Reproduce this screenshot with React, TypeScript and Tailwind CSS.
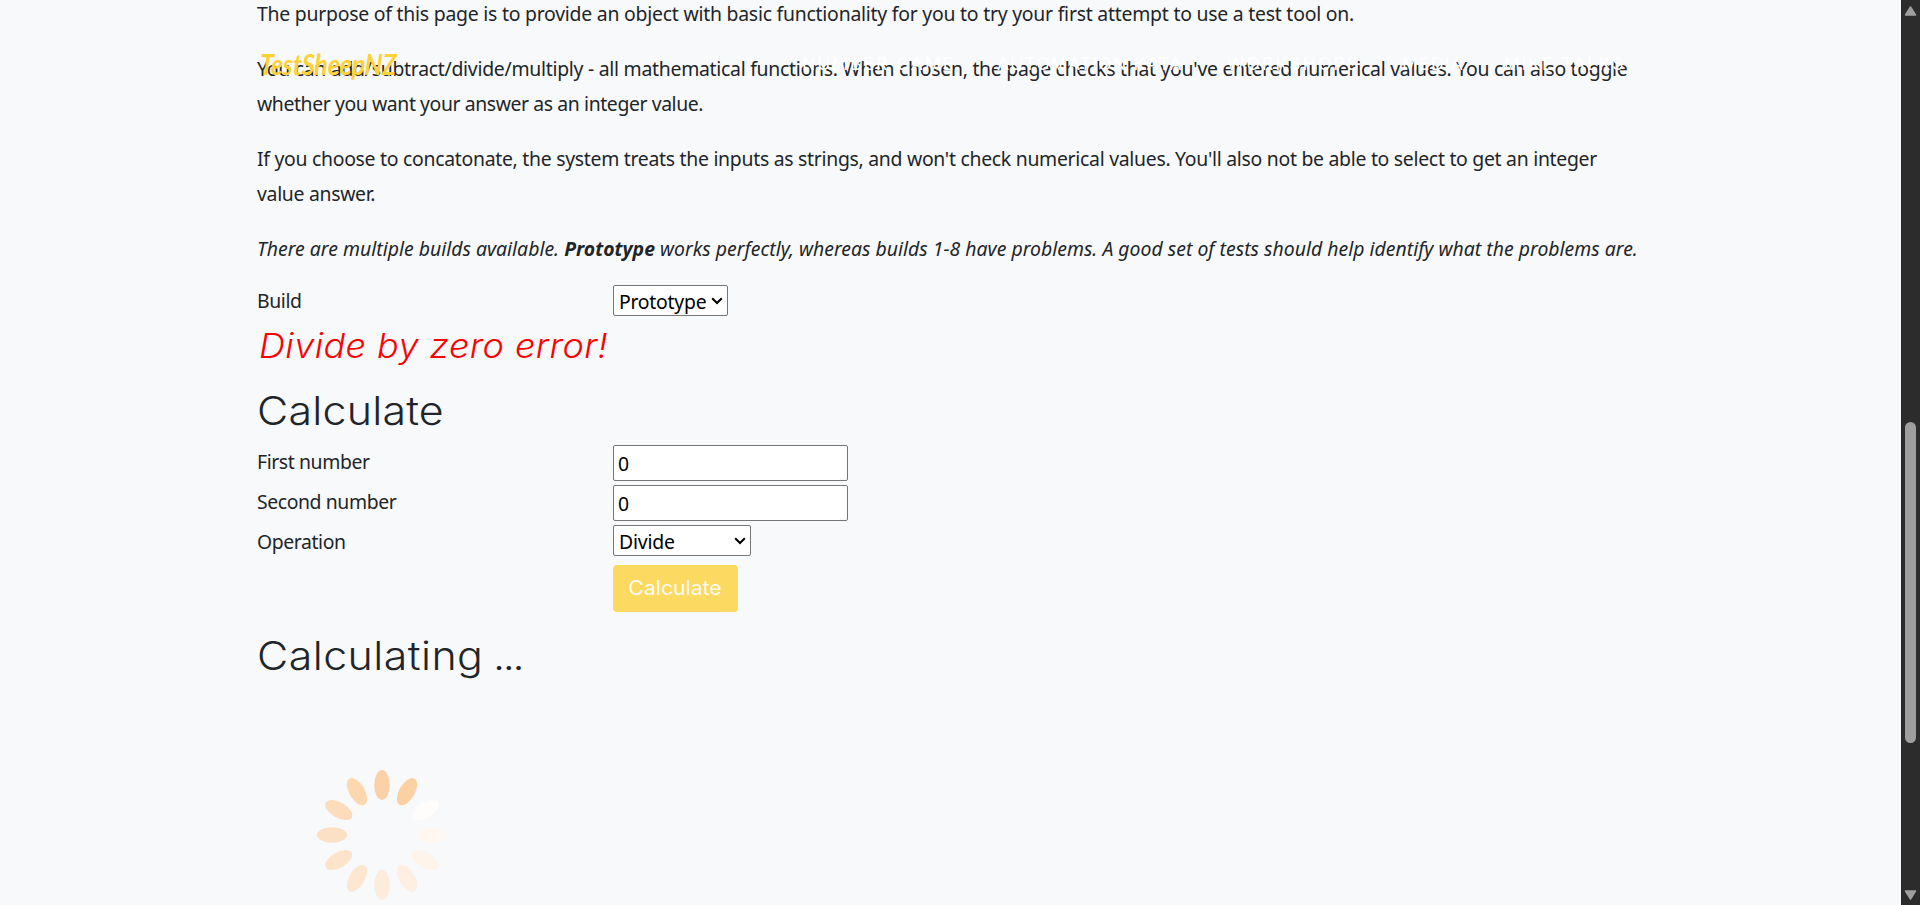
import React from "react";

const petals = [
  ["#fbd0a2", 30], ["#fefdfc", 60], ["#fef8f1", 90], ["#fef4ea", 120],
  ["#feefe2", 150], ["#fdebdc", 180], ["#fde7d0", 210], ["#fce4cb", 240],
  ["#fce0c4", 270], ["#fcdcbb", 300], ["#fcd7b0", 330], ["#fbd2a8", 0],
] as const;

function Chevron() {
  return (
    <svg width="12" height="8" viewBox="0 0 12 8" className="shrink-0">
      <path d="M1.2 1.2 6 6 10.8 1.2" fill="none" stroke="#000" strokeWidth="2" />
    </svg>
  );
}

function Line({ children, className = "" }: { children: React.ReactNode; className?: string }) {
  return <span className={"block w-max " + className}>{children}</span>;
}

function Label({ children }: { children: React.ReactNode }) {
  return <div className="w-[356px] leading-[33px] tracking-[-0.4px]">{children}</div>;
}

export default function App() {
  return (
    <div className="relative flex h-[905px] w-[1920px] overflow-hidden bg-[#f8f9fb] font-['Noto_Sans','Open_Sans',sans-serif] text-[19.4px] text-[#212529]">
      <header className="absolute left-0 top-0 z-10 h-[128px] w-[1901px]">
        <div className="absolute left-[260px] top-[46px] origin-left scale-x-[0.85] -skew-x-3 font-['Lato',sans-serif] text-[29px] font-bold italic leading-[36px] text-[#fed136]">TestSheepNZ</div>
        <nav className="absolute left-[802px] top-[50px] flex font-['Inter',sans-serif] text-[17.5px] leading-[28px] text-white">
          <span className="w-[195px] tracking-[2px]">NUMBER GAME</span>
          <span className="w-[230px] tracking-[1.25px]">AUTOMATION KATA</span>
          <span className="w-[175px] tracking-[2.2px]">WORKSHOPS</span>
          <span className="w-[102px] tracking-[1.3px]">MEDIA</span>
          <span className="tracking-[1.9px]">MIKE TALKS</span>
        </nav>
      </header>
      <main className="w-[1901px] pl-[257px] -mt-[4px]">
        <p className="mb-5 leading-[35px]">
          <Line className="tracking-[-0.23px]">The purpose of this page is to provide an object with basic functionality for you to try your first attempt to use a test tool on.</Line>
        </p>
        <p className="mb-5 leading-[35px]">
          <Line className="tracking-[-0.27px]">You can add/subtract/divide/multiply - all mathematical functions. When chosen, the page checks that you've entered numerical values. You can also toggle</Line>
          <Line className="tracking-[-0.4px]">whether you want your answer as an integer value.</Line>
        </p>
        <p className="mb-5 leading-[35px]">
          <Line className="tracking-[-0.28px]">If you choose to concatonate, the system treats the inputs as strings, and won't check numerical values. You'll also not be able to select to get an integer</Line>
          <Line className="tracking-[-0.3px]">value answer.</Line>
        </p>
        <p className="mb-[18px] italic leading-[35px]">
          <Line className="tracking-[0.02px]">There are multiple builds available. <strong>Prototype</strong> works perfectly, whereas builds 1-8 have problems. A good set of tests should help identify what the problems are.</Line>
        </p>
        <div className="flex h-[40px]">
          <Label>Build</Label>
          <div className="mt-[1px] flex h-[31px] w-[115px] items-center justify-between rounded-[2px] border border-[#767676] bg-white pl-[5px] pr-[4px] text-black">
            <span className="pt-[2px] tracking-[-0.25px]">Prototype</span><Chevron />
          </div>
        </div>
        <h2 className="ml-[2px] mt-px w-max origin-left scale-x-[1.06] font-['Inter',sans-serif] text-[34px] font-light italic leading-[42px] tracking-[0.4px] text-[#ff0000]">Divide by zero error!</h2>
        <h1 className="mt-[20px] w-max origin-left scale-x-[1.1] font-['Inter',sans-serif] text-[39px] font-light leading-[48px] tracking-[0.2px]">Calculate</h1>
        <div className="mt-[10px] flex h-[40px]">
          <Label>First number</Label>
          <div className="h-[36px] w-[235px] rounded-[2px] border border-[#767676] bg-white pl-[4px] leading-[35px] text-black">0</div>
        </div>
        <div className="flex h-[40px]">
          <Label>Second number</Label>
          <div className="h-[36px] w-[235px] rounded-[2px] border border-[#767676] bg-white pl-[4px] leading-[35px] text-black">0</div>
        </div>
        <div className="flex h-[40px]">
          <Label>Operation</Label>
          <div className="flex h-[31px] w-[138px] items-center justify-between rounded-[2px] border border-[#767676] bg-white pl-[5px] pr-[4px] text-black">
            <span className="pt-[2px] tracking-[-0.2px]">Divide</span><Chevron />
          </div>
        </div>
        <div className="ml-[356px] flex h-[47px] w-[125px] items-center justify-center rounded-[4px] bg-[#fcd960] pb-px font-['Inter',sans-serif] text-[20px] text-[#fefbef]"><span className="scale-x-[1.06]">Calculate</span></div>
        <h1 className="mt-[20px] w-max origin-left scale-x-[1.1] font-['Inter',sans-serif] text-[39px] font-light leading-[48px] tracking-[0.4px]">Calculating<span className="tracking-[-2.2px]"> ...</span></h1>
        <svg width="250" height="250" viewBox="0 0 250 250" className="mt-[30px]">
          {petals.map(([fill, angle]) => (
            <ellipse key={angle} cx="125" cy="75" rx="7.8" ry="15" fill={fill} transform={`rotate(${angle} 125 125)`} />
          ))}
        </svg>
      </main>
      <div className="flex h-full w-[19px] flex-col items-center bg-[#2c2c2c]">
        <svg width="19" height="905" viewBox="0 0 19 905">
          <path d="M9.5 7 14.5 15H4.5Z" fill="#9f9f9f" stroke="#9f9f9f" strokeWidth="1.5" strokeLinejoin="round" />
          <rect x="4" y="422" width="11" height="321" rx="5.5" fill="#9f9f9f" />
          <path d="M9.5 899 14.5 891H4.5Z" fill="#9f9f9f" stroke="#9f9f9f" strokeWidth="1.5" strokeLinejoin="round" />
        </svg>
      </div>
    </div>
  );
}
